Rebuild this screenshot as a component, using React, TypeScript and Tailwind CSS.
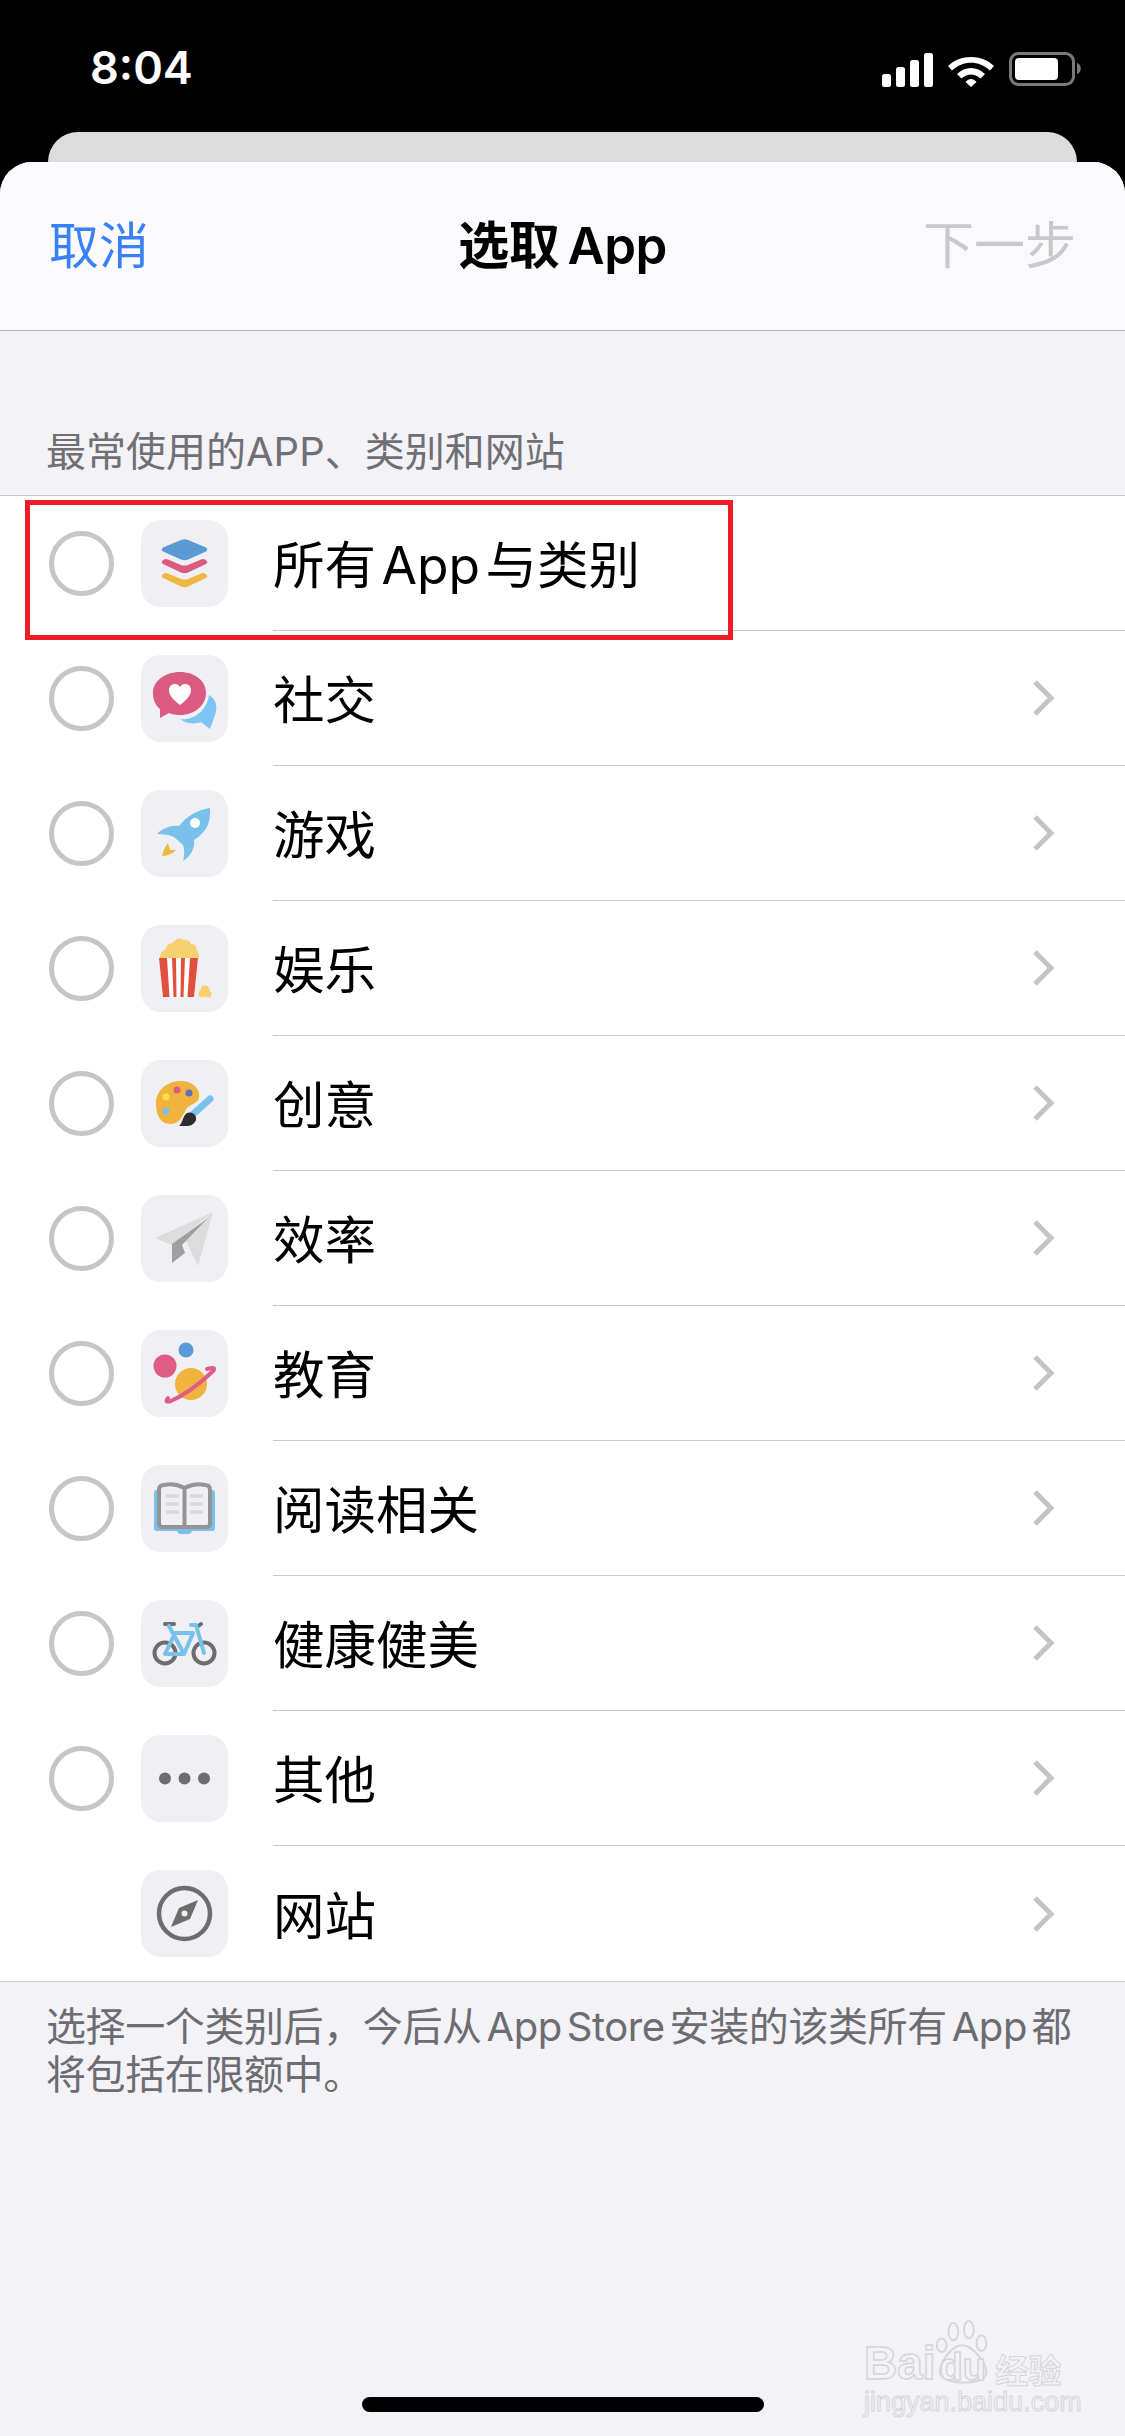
const rows = [
  { title: "所有 App 与类别", icon: "stack", chevron: false },
  { title: "社交", icon: "social", chevron: true },
  { title: "游戏", icon: "rocket", chevron: true },
  { title: "娱乐", icon: "popcorn", chevron: true },
  { title: "创意", icon: "palette", chevron: true },
  { title: "效率", icon: "plane", chevron: true },
  { title: "教育", icon: "planet", chevron: true },
  { title: "阅读相关", icon: "book", chevron: true },
  { title: "健康健美", icon: "bike", chevron: true },
  { title: "其他", icon: "more", chevron: true },
  { title: "网站", icon: "compass", chevron: true, noRadio: true },
];

const CategoryIcon = ({ name }: { name: string }) => {
  return (
    <svg width="87" height="87" viewBox="0 0 87 87" className="block shrink-0">
      <rect width="87" height="87" rx="20" fill="#efeff4" />
      {name === "stack" && (
        <>
          <path d="M40 20 Q43.500 18.500 47 20 L65 27.500 Q67.500 29.500 65 31.500 L47 39.500 Q43.500 41 40 39.500 L22 31.500 Q19.500 29.500 22 27.500 Z" fill="#5b9bd5" />
          <path d="M23 39.500 Q25 38.500 27 39.500 L40 45 Q43.500 46 47 45 L60 39.500 Q62 38.500 64 39.500 Q68 42 65 44 L47 52.500 Q43.500 54 40 52.500 L22 44 Q19 42 23 39.500 Z" fill="#da5a81" />
          <path d="M23 53.500 Q25 52.500 27 53.500 L40 59 Q43.500 60 47 59 L60 53.500 Q62 52.500 64 53.500 Q68 56 65 58 L47 66.500 Q43.500 68 40 66.500 L22 58 Q19 56 23 53.500 Z" fill="#f0b840" />
        </>
      )}
      {name === "social" && (
        <>
          <path d="M68 40 C75 44 77 52 74 60 L69 74 L60 67 C52 70 44 68 39 64 C52 66 66 56 68 40 Z" fill="#7cc5f2" />
          <path d="M39 17 C54 17 65 26 65 38 C65 50 54 60 39 60 C34 60 30 59 28 58 L19 63 L19 54 C14 50 12 44 12 38 C12 26 24 17 39 17 Z" fill="#da5a81" />
          <path d="M39 50 C33 45 28 41 28 35 C28 31 31 29 34 29 C36 29 38 30 39 32 C40 30 42 29 44 29 C47 29 50 31 50 35 C50 41 45 45 39 50 Z" fill="#fff" />
        </>
      )}
      {name === "rocket" && (
        <>
          <path d="M69 18 C70 32 66 42 53 50 C54 58 50 66 42 71 C44 64 43 58 42 55 L33 47 C29 45 23 44 16 44 C22 38 30 35 38 36 C46 26 56 20 69 18 Z" fill="#78c1ec" />
          <circle cx="54" cy="33" r="5" fill="#fff" />
          <path d="M27 53 L29 60 L35 60 C31 64 26 66 21 66 C22 61 24 57 27 53 Z" fill="#f0b840" />
        </>
      )}
      {name === "popcorn" && (
        <>
          <path d="M19 33 C19 28 22 25 25 24 C25 20 29 18 32 18 C33 15 39 12 42 15 C45 14 50 16 50 19 C54 19 56 22 55 24 C57 26 58 29 58 33 Z" fill="#f7d070" />
          <path d="M18 33 H57 L53 72 H22 Z" fill="#fff" />
          <path d="M18 33 H26 L28.500 72 H22 Z M31 33 H35 L35.500 72 H32.500 Z M40 33 H44 L42.500 72 H39.500 Z M49 33 H57 L53 72 H46.500 Z" fill="#e14f3f" />
          <circle cx="64" cy="65" r="4.500" fill="#f7d070" />
          <circle cx="61" cy="69" r="3.500" fill="#f7d070" />
          <circle cx="67" cy="69" r="3.500" fill="#f7d070" />
        </>
      )}
      {name === "palette" && (
        <>
          <path d="M38 21 C50 20 60 28 58 38 C57 43 50 44 46 48 C43 52 40 64 30 64 C18 64 15 53 15 43 C15 31 25 22 38 21 Z" fill="#efb33e" />
          <circle cx="36" cy="30" r="3.500" fill="#da5a81" />
          <circle cx="48" cy="33" r="3.500" fill="#5f6fb8" />
          <circle cx="25" cy="37" r="3.500" fill="#f9e04b" />
          <circle cx="25" cy="51" r="3.500" fill="#78c1ec" />
          <path d="M51 55 L69 39" stroke="#78c1ec" strokeWidth="7" strokeLinecap="round" />
          <path d="M46 53 C51 51 56 55 55 60 C53 65 49 66 45 66 L38 66 C42 63 41 57 46 53 Z" fill="#2e2e2e" />
        </>
      )}
      {name === "plane" && (
        <>
          <path d="M72 17 L14 43 L31 50 Z" fill="#dcdcdc" />
          <path d="M72 17 L44 44 L57 71 Z" fill="#dcdcdc" />
          <path d="M67 23 L31 49 L31 68 L44 58 L41 50 Z" fill="#a0a0a0" />
        </>
      )}
      {name === "planet" && (
        <>
          <circle cx="45" cy="20" r="7.500" fill="#5b9bd5" />
          <circle cx="24" cy="36" r="11.500" fill="#df5c86" />
          <circle cx="50" cy="54" r="16" fill="#efb33e" />
          <path d="M66 39 Q77 36 71 42 Q50 62 30 71 Q23 73 27 68" fill="none" stroke="#df5c86" strokeWidth="4" strokeLinecap="round" />
        </>
      )}
      {name === "book" && (
        <>
          <path d="M16 25 H71 Q74 25 74 28 V63 Q74 66 71 66 H51 Q50 69 47 69 H40 Q37 69 36 66 H16 Q13 66 13 63 V28 Q13 25 16 25 Z" fill="#78c1ec" />
          <path d="M23 20 C31 18 38 20 43.500 23 C49 20 56 18 64 20 Q69 20 69 25 V59 Q69 62 65 62 L43.500 62 L22 62 Q18 62 18 59 V25 Q18 20 23 20 Z" fill="#efeff4" stroke="#949494" strokeWidth="4" />
          <path d="M43.500 23 V62" stroke="#949494" strokeWidth="4" />
          <path d="M25 31 H38 M25 39 H38 M25 47 H38 M49 31 H62 M49 39 H62 M49 47 H62" stroke="#d9d9d9" strokeWidth="3.500" />
        </>
      )}
      {name === "bike" && (
        <>
          <circle cx="24" cy="53" r="10.500" fill="none" stroke="#6d6d6d" strokeWidth="4" />
          <circle cx="63" cy="53" r="10.500" fill="none" stroke="#6d6d6d" strokeWidth="4" />
          <path d="M24 24 H33" stroke="#6d6d6d" strokeWidth="4" strokeLinecap="round" />
          <path d="M56 27 L60 24" stroke="#6d6d6d" strokeWidth="4" strokeLinecap="round" />
          <path d="M28 26 L43 54 L24 54 L34 33 H52 L43 54 M50 25 H55 L63 53" fill="none" stroke="#78c1ec" strokeWidth="4" strokeLinejoin="round" strokeLinecap="round" />
        </>
      )}
      {name === "more" && (
        <>
          <circle cx="24" cy="43.500" r="6" fill="#6d6d6d" />
          <circle cx="43.500" cy="43.500" r="6" fill="#6d6d6d" />
          <circle cx="63" cy="43.500" r="6" fill="#6d6d6d" />
        </>
      )}
      {name === "compass" && (
        <>
          <circle cx="43.500" cy="43.500" r="25.500" fill="none" stroke="#6d6d6d" strokeWidth="4.500" />
          <path d="M57 30 L49 49 L30 57 L38 38 Z" fill="#6d6d6d" />
          <circle cx="43.500" cy="43.500" r="3" fill="#efeff4" />
        </>
      )}
    </svg>
  );
};

const StatusIcons = () => {
  return (
    <svg width="202" height="36" viewBox="0 0 202 36" className="block">
      <g fill="#fff">
        <rect x="0" y="22" width="9" height="13" rx="2.500" />
        <rect x="14" y="15" width="9" height="20" rx="2.500" />
        <rect x="28" y="8" width="9" height="27" rx="2.500" />
        <rect x="42" y="1" width="9" height="34" rx="2.500" />
        <path d="M66 14 C78 2 100 2 112 14 L108 18.500 C97 8 81 8 70 18.500 Z" />
        <path d="M75 22 C83 14 95 14 103 22 L98.500 26.500 C92 21 86 21 79.500 26.500 Z" />
        <path d="M83.500 30 C87 26 91 26 94.500 30 L89 35 Z" />
      </g>
      <rect x="128.500" y="1.500" width="63" height="31" rx="8" fill="none" stroke="#7a7a7a" strokeWidth="3" />
      <rect x="133" y="6" width="43" height="22" rx="4" fill="#fff" />
      <path d="M195 11 C200 12 200 21 195 22 Z" fill="#7a7a7a" />
    </svg>
  );
};

const Row = ({ title, icon, chevron, noRadio }: { title: string; icon: string; chevron: boolean; noRadio?: boolean }) => {
  return (
    <li className="group flex h-[135px] items-center">
      <div className="flex w-[141px] shrink-0 justify-start pl-[49px]">
        {!noRadio && <span className="h-[65px] w-[65px] rounded-full border-[5px] border-[#c6c6c8]" />}
      </div>
      <CategoryIcon name={icon} />
      <div className="ml-[45px] flex h-full flex-1 items-center justify-between border-b border-[#c9c9cc] pr-[70px] group-last:border-b-0">
        <span className="pt-[6px] text-[51.500px] text-black [word-spacing:-9px]">{title}</span>
        {chevron && (
          <svg width="24" height="38" viewBox="0 0 24 38" fill="none">
            <path d="M4 3 L20 19 L4 35" stroke="#c4c4c7" strokeWidth="5" />
          </svg>
        )}
      </div>
    </li>
  );
};

const Watermark = () => {
  return (
    <div className="absolute left-[864px] top-[2316px] w-[210px] text-[#f2f2f7]">
      <div className="flex h-[66px] items-end font-['Liberation_Sans',sans-serif] leading-[0.8] [-webkit-text-stroke:1.5px_#d6d6d9]">
        <span className="text-[46px] font-bold">Bai</span>
        <span className="relative ml-[4px] w-[50px] text-[38px] font-bold">
          <svg width="62" height="68" viewBox="0 0 58 70" className="absolute bottom-[-4px] left-[-7px]" fill="none" stroke="#d6d6d9" strokeWidth="2">
            <ellipse cx="18" cy="14" rx="5" ry="9" />
            <ellipse cx="34" cy="12" rx="5" ry="9" />
            <ellipse cx="6" cy="28" rx="5" ry="7" />
            <ellipse cx="47" cy="26" rx="5" ry="8" />
            <path d="M27 28 C38 28 52 46 52 56 C52 70 6 70 4 56 C4 46 16 28 27 28 Z" />
          </svg>
          <span className="relative">du</span>
        </span>
        <span className="ml-[6px] font-['Noto_Sans_CJK_SC',sans-serif] text-[33px] font-bold [-webkit-text-stroke:1px_#d6d6d9]">经验</span>
      </div>
      <p className="mt-[6px] font-['Liberation_Sans',sans-serif] text-[27px] leading-[28px] [-webkit-text-stroke:1px_#d6d6d9]">jingyan.baidu.com</p>
    </div>
  );
};

export default function App() {
  return (
    <div className="relative flex h-[2436px] w-[1125px] flex-col overflow-hidden bg-black font-['Inter','Noto_Sans_CJK_SC',sans-serif]">
      <div className="flex h-[132px] shrink-0 items-start justify-between pl-[90px] pr-[41px] pt-[44px] text-white">
        <span className="text-[45px] font-semibold leading-[48px]">8:04</span>
        <div className="pt-[8px]"><StatusIcons /></div>
      </div>
      <div className="mx-[48px] h-[30px] shrink-0 rounded-t-[30px] bg-[#dcdcdd]" />
      <div className="flex flex-1 flex-col overflow-hidden rounded-t-[32px] bg-[#f2f2f7]">
        <header className="flex h-[169px] shrink-0 items-center justify-between border-b border-[#b2b2b4] bg-[#fafafc] px-[49px]">
          <span className="w-[200px] text-[50px] text-[#3a80f6]">取消</span>
          <span className="text-[51px] font-semibold tracking-[-0.5px] text-black [word-spacing:-4px]">选取 App</span>
          <span className="w-[200px] text-right text-[51px] text-[#c9c9cb]">下一步</span>
        </header>
        <p className="flex h-[164px] shrink-0 items-end pb-[19px] pl-[46px] text-[40px] leading-[48px] text-[#6f6f74]">最常使用的APP、类别和网站</p>
        <ul className="shrink-0 border-y border-[#c9c9cc] bg-white">
          {rows.map((row) => (
            <Row key={row.title} {...row} />
          ))}
        </ul>
        <p className="pl-[46px] pr-[40px] pt-[21px] text-[40px] leading-[48px] tracking-[-0.4px] text-[#6c6c71] [word-spacing:-6px]">选择一个类别后，今后从 App Store 安装的该类所有 App 都将包括在限额中。</p>
      </div>
      <div className="absolute left-[25px] top-[500px] h-[140px] w-[708px] border-[5px] border-[#ee1c25]" />
      <Watermark />
      <div className="absolute bottom-[24px] left-[362px] h-[15px] w-[402px] rounded-full bg-black" />
    </div>
  );
}
